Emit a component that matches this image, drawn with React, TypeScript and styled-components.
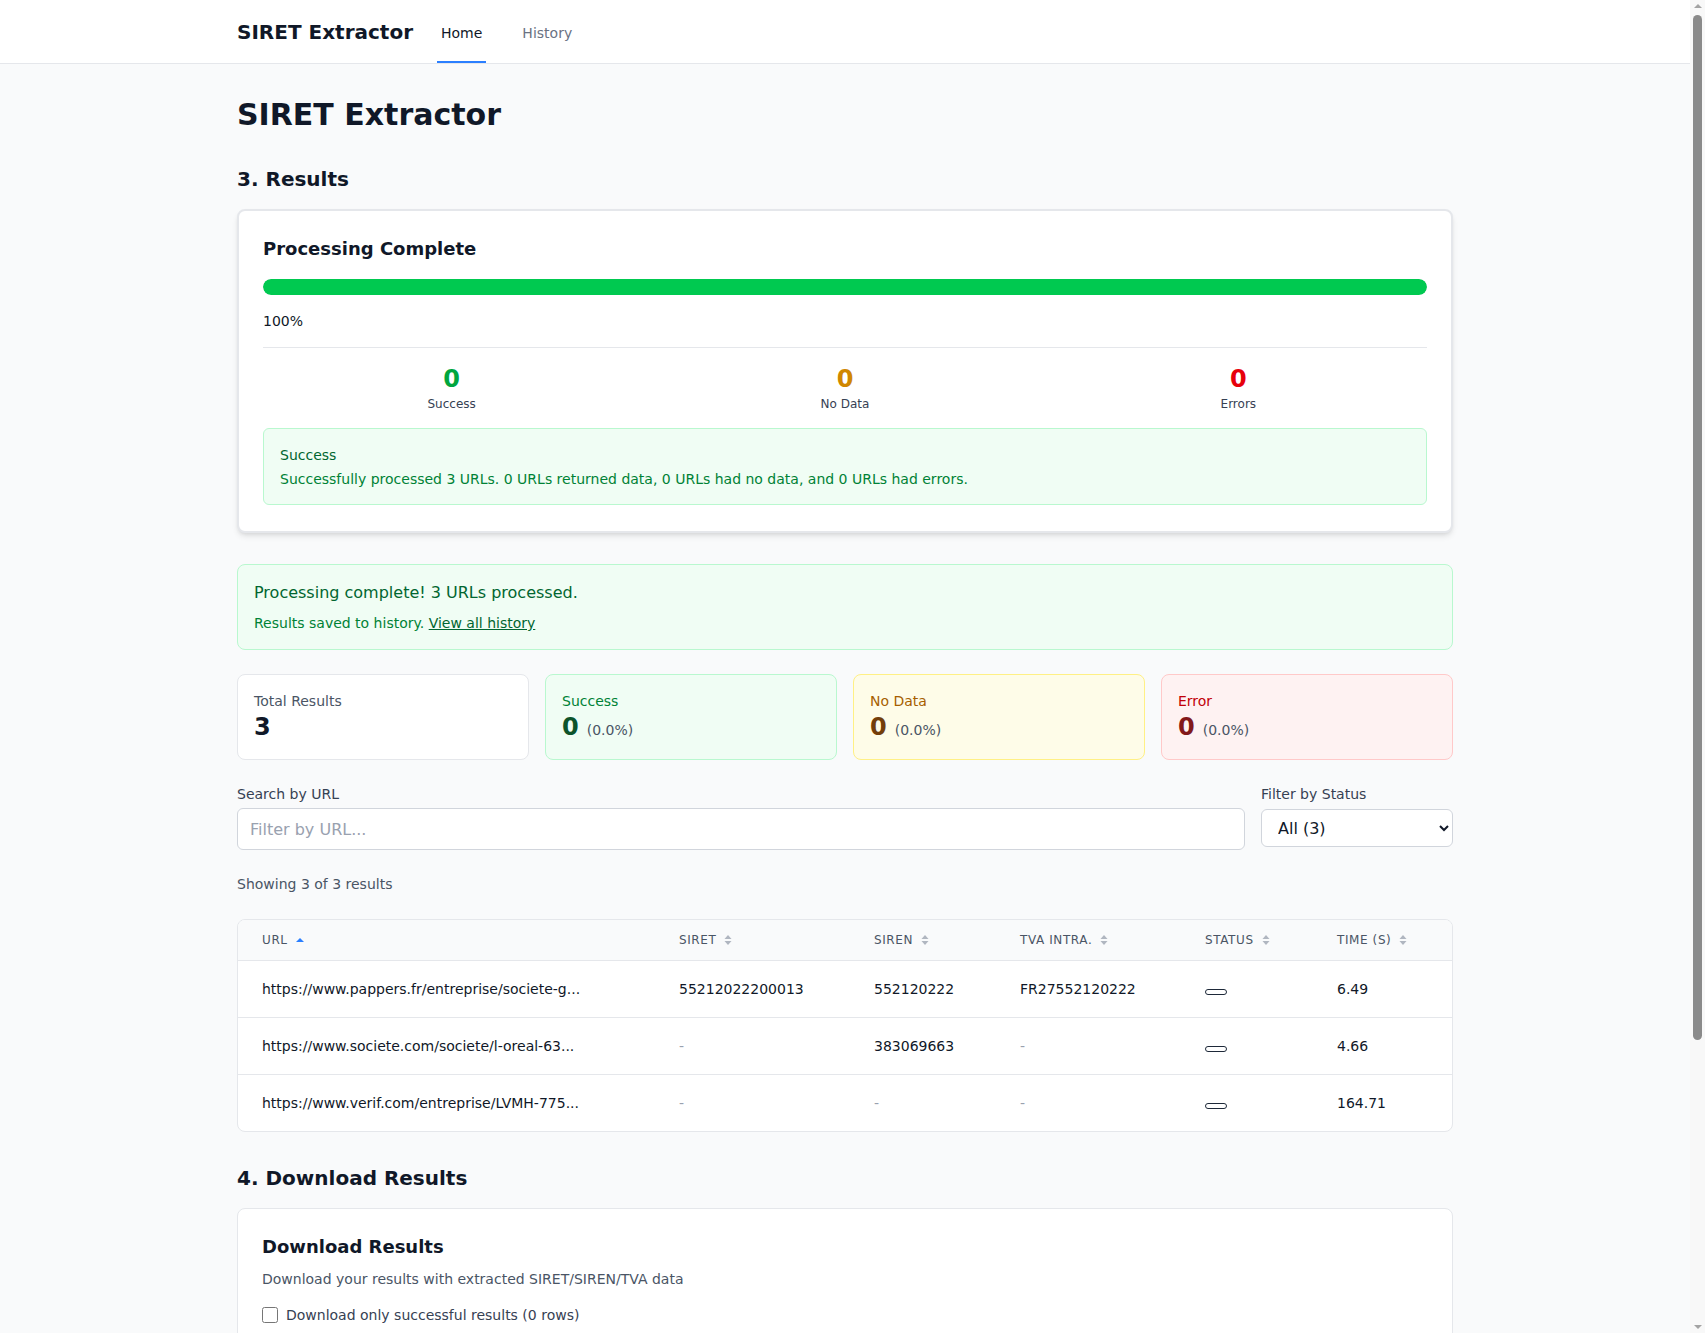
import React, { useState } from "react";
import styled, { createGlobalStyle, css } from "styled-components";

const GlobalStyle = createGlobalStyle`
  * {
    box-sizing: border-box;
  }
  body {
    margin: 0 15px 0 0;
    background: #f9fafb;
    font-family: "DejaVu Sans", "Noto Sans", sans-serif;
    color: #101828;
  }
`;

// the reference shows the browser's classic scrollbar, the page leaves 15px for it
const ScrollTrack = styled.div`
  position: fixed;
  top: 0;
  right: 0;
  width: 15px;
  height: 100vh;
  background: #f8f8f8;
  display: flex;
  flex-direction: column;
  align-items: center;
  justify-content: space-between;
  padding: 4px 0;
`;

const ScrollArrow = styled.div<{ $down?: boolean }>`
  width: 0;
  height: 0;
  border-left: 4px solid transparent;
  border-right: 4px solid transparent;
  ${(p) =>
    p.$down
      ? css`
          border-top: 4px solid #a3a3a3;
        `
      : css`
          border-bottom: 4px solid #a3a3a3;
        `}
`;

const ScrollThumb = styled.div`
  position: fixed;
  top: 15px;
  right: 3px;
  width: 9px;
  height: 1025px;
  border-radius: 5px;
  background: #8a8a8a;
`;

const Nav = styled.nav`
  height: 64px;
  background: #ffffff;
  border-bottom: 1px solid #e5e7eb;
`;

const NavInner = styled.div`
  max-width: 1280px;
  margin: 0 auto;
  padding: 0 32px;
  height: 100%;
  display: flex;
  align-items: stretch;
`;

const Brand = styled.div`
  display: flex;
  align-items: center;
  font-size: 20px;
  font-weight: 700;
  color: #101828;
  margin-right: 24px;
`;

const NavLinks = styled.div`
  display: flex;
  gap: 32px;
`;

const NavLink = styled.a<{ $active?: boolean }>`
  display: inline-flex;
  align-items: center;
  padding: 4px 4px 0;
  font-size: 14px;
  font-weight: 500;
  text-decoration: none;
  border-bottom: 2px solid ${(p) => (p.$active ? "#2b7fff" : "transparent")};
  color: ${(p) => (p.$active ? "#101828" : "#6a7282")};
  cursor: pointer;
`;

const Main = styled.main`
  max-width: 1280px;
  margin: 0 auto;
  padding: 33px 32px 48px;
`;

const PageTitle = styled.h1`
  margin: 0 0 32px;
  font-size: 30px;
  line-height: 36px;
  font-weight: 700;
  color: #101828;
`;

const SectionTitle = styled.h2<{ $top?: number }>`
  margin: ${(p) => p.$top ?? 0}px 0 16px;
  font-size: 20px;
  line-height: 28px;
  font-weight: 700;
  color: #101828;
`;

const Card = styled.div<{ $shadow?: boolean }>`
  background: #ffffff;
  border: 1px solid #e5e7eb;
  border-radius: 8px;
  padding: 24px;
  ${(p) =>
    p.$shadow &&
    css`
      border: 2px solid #e5e7eb;
      padding-bottom: 26px;
      box-shadow: 0 4px 6px -1px rgba(0, 0, 0, 0.1), 0 2px 4px -2px rgba(0, 0, 0, 0.1);
    `}
`;

const CardTitle = styled.h3<{ $mb?: number }>`
  margin: 0 0 ${(p) => p.$mb ?? 16}px;
  font-size: 18px;
  line-height: 28px;
  font-weight: 700;
  color: #101828;
`;

const ProgressTrack = styled.div`
  height: 16px;
  border-radius: 9999px;
  background: #e5e7eb;
  overflow: hidden;
`;

const ProgressFill = styled.div`
  height: 100%;
  background: #00c950;
  border-radius: 9999px;
`;

const Percent = styled.div`
  margin-top: 16px;
  font-size: 14px;
  line-height: 20px;
  color: #101828;
`;

const StatsRow = styled.div`
  margin-top: 16px;
  padding-top: 15px;
  border-top: 1px solid #e5e7eb;
  display: grid;
  grid-template-columns: repeat(3, 1fr);
  gap: 16px;
  text-align: center;
`;

const toneColor = {
  green: "#00a63e",
  yellow: "#d08700",
  red: "#e7000b",
};

const StatNumber = styled.div<{ $tone: keyof typeof toneColor }>`
  font-size: 24px;
  line-height: 32px;
  font-weight: 700;
  color: ${(p) => toneColor[p.$tone]};
`;

const StatLabel = styled.div`
  margin-top: 1px;
  font-size: 12px;
  line-height: 16px;
  color: #364153;
`;

const Alert = styled.div`
  margin-top: 16px;
  background: #f0fdf4;
  border: 1px solid #b9f8cf;
  border-radius: 6px;
  padding: 16px 16px 15px;
`;

const AlertTitle = styled.div`
  font-size: 14px;
  line-height: 20px;
  font-weight: 500;
  color: #016630;
`;

const AlertText = styled.div`
  margin-top: 4px;
  font-size: 14px;
  line-height: 20px;
  color: #008236;
`;

const Banner = styled.div`
  margin-top: 31px;
  background: #f0fdf4;
  border: 1px solid #b9f8cf;
  border-radius: 8px;
  padding: 16px;
`;

const BannerTitle = styled.p`
  margin: 0;
  font-size: 16px;
  line-height: 24px;
  color: #016630;
`;

const BannerText = styled.p`
  margin: 8px 0 0;
  font-size: 14px;
  line-height: 20px;
  color: #008236;

  a {
    color: #016630;
    text-decoration: underline;
  }
`;

const SummaryGrid = styled.div`
  margin-top: 24px;
  display: grid;
  grid-template-columns: repeat(4, 1fr);
  gap: 16px;
`;

const summaryTones = {
  neutral: { bg: "#ffffff", border: "#e5e7eb", label: "#4a5565", value: "#101828" },
  green: { bg: "#f0fdf4", border: "#b9f8cf", label: "#008236", value: "#0d542b" },
  yellow: { bg: "#fefce8", border: "#fff085", label: "#a65f00", value: "#733e0a" },
  red: { bg: "#fef2f2", border: "#ffc9c9", label: "#c10007", value: "#82181a" },
};

type SummaryTone = keyof typeof summaryTones;

const SummaryCard = styled.div<{ $tone: SummaryTone }>`
  background: ${(p) => summaryTones[p.$tone].bg};
  border: 1px solid ${(p) => summaryTones[p.$tone].border};
  border-radius: 8px;
  padding: 16px 16px 13px;
`;

const SummaryLabel = styled.div<{ $tone: SummaryTone }>`
  font-size: 14px;
  line-height: 20px;
  color: ${(p) => summaryTones[p.$tone].label};
`;

const SummaryValue = styled.div<{ $tone: SummaryTone }>`
  font-size: 24px;
  line-height: 32px;
  font-weight: 700;
  color: ${(p) => summaryTones[p.$tone].value};

  span {
    margin-left: 8px;
    font-size: 14px;
    font-weight: 400;
    color: #4a5565;
  }
`;

const FilterRow = styled.div`
  margin-top: 24px;
  display: flex;
  gap: 16px;
`;

const Field = styled.div<{ $grow?: boolean; $width?: number }>`
  display: flex;
  flex-direction: column;
  flex: ${(p) => (p.$grow ? "1" : "none")};
  width: ${(p) => (p.$width ? `${p.$width}px` : "auto")};
`;

const FieldLabel = styled.label`
  font-size: 14px;
  line-height: 20px;
  color: #364153;
  margin-bottom: 4px;
`;

const TextInput = styled.input`
  height: 42px;
  padding: 8px 12px;
  font-size: 16px;
  font-family: inherit;
  border: 1px solid #d1d5dc;
  border-radius: 6px;
  background: #ffffff;
  color: #101828;
  outline: none;

  &::placeholder {
    color: #99a1af;
  }
`;

const Select = styled.select`
  margin-top: 1px;
  height: 38px;
  padding: 0 8px 0 12px;
  font-size: 16px;
  font-family: inherit;
  border: 1px solid #d1d5dc;
  border-radius: 6px;
  background: #ffffff;
  color: #101828;
`;

const ShowingText = styled.div`
  margin-top: 24px;
  font-size: 14px;
  line-height: 20px;
  color: #4a5565;
`;

const TableWrap = styled.div`
  margin-top: 25px;
  background: #ffffff;
  border: 1px solid #e5e7eb;
  border-radius: 8px;
  overflow: hidden;
`;

const Table = styled.table`
  width: 100%;
  border-collapse: collapse;
  table-layout: fixed;
`;

const Th = styled.th<{ $width: number }>`
  width: ${(p) => p.$width}px;
  background: #f9fafb;
  padding: 12px 24px;
  text-align: left;
  font-size: 12px;
  line-height: 16px;
  font-weight: 500;
  letter-spacing: 0.05em;
  text-transform: uppercase;
  color: #4a5565;
  border-bottom: 1px solid #e5e7eb;
  white-space: nowrap;
`;

const HeadInner = styled.span`
  display: inline-flex;
  align-items: center;
  gap: 8px;
`;

const Td = styled.td<{ $muted?: boolean }>`
  padding: 18px 24px;
  font-size: 14px;
  line-height: 20px;
  color: ${(p) => (p.$muted ? "#99a1af" : "#101828")};
  white-space: nowrap;
  overflow: hidden;
`;

const Tr = styled.tr`
  & + & td {
    border-top: 1px solid #e5e7eb;
  }
`;

const StatusPill = styled.span`
  display: inline-block;
  width: 22px;
  height: 6px;
  border: 1.5px solid #1e2939;
  border-radius: 9999px;
  background: #ffffff;
  vertical-align: middle;
  margin-top: 4px;
`;

const CardText = styled.p`
  margin: 8px 0 0;
  font-size: 14px;
  line-height: 20px;
  color: #4a5565;
`;

const CheckRow = styled.label`
  margin-top: 16px;
  display: flex;
  align-items: center;
  gap: 8px;
  font-size: 14px;
  line-height: 20px;
  color: #364153;

  input {
    margin: 0;
    width: 16px;
    height: 16px;
  }
`;

const ButtonRow = styled.div`
  margin-top: 20px;
  display: flex;
  gap: 12px;
`;

const Button = styled.button<{ $primary?: boolean }>`
  padding: 10px 18px;
  font-size: 14px;
  font-family: inherit;
  font-weight: 500;
  border-radius: 6px;
  border: 1px solid ${(p) => (p.$primary ? "#155dfc" : "#d1d5dc")};
  background: ${(p) => (p.$primary ? "#155dfc" : "#ffffff")};
  color: ${(p) => (p.$primary ? "#ffffff" : "#364153")};
`;

const Footer = styled.div`
  margin-top: 32px;
  display: flex;
  justify-content: center;
  padding: 32px 0 80px;
`;

function SortIcon({ active }: { active?: boolean }) {
  if (active) {
    return (
      <svg width="8" height="6" viewBox="0 0 8 6">
        <path d="M0 5 L4 1 L8 5 Z" fill="#2b7fff" />
      </svg>
    );
  }
  return (
    <svg width="8" height="12" viewBox="0 0 8 12">
      <path d="M0.5 5 L4 1 L7.5 5 Z" fill="#b0b6c0" />
      <path d="M0.5 7 L4 11 L7.5 7 Z" fill="#b0b6c0" />
    </svg>
  );
}

const columns = [
  { key: "url", label: "URL", width: 417, active: true },
  { key: "siret", label: "SIRET", width: 195 },
  { key: "siren", label: "SIREN", width: 146 },
  { key: "tva", label: "TVA INTRA.", width: 185 },
  { key: "status", label: "STATUS", width: 132 },
  { key: "time", label: "TIME (S)", width: 139 },
];

const rows = [
  {
    url: "https://www.pappers.fr/entreprise/societe-g...",
    siret: "55212022200013",
    siren: "552120222",
    tva: "FR27552120222",
    time: "6.49",
  },
  {
    url: "https://www.societe.com/societe/l-oreal-63...",
    siret: "",
    siren: "383069663",
    tva: "",
    time: "4.66",
  },
  {
    url: "https://www.verif.com/entreprise/LVMH-775...",
    siret: "",
    siren: "",
    tva: "",
    time: "164.71",
  },
];

export default function App() {
  const [query, setQuery] = useState("");
  const [onlySuccess, setOnlySuccess] = useState(false);

  return (
    <>
      <GlobalStyle />
      <Nav>
        <NavInner>
          <Brand>SIRET Extractor</Brand>
          <NavLinks>
            <NavLink $active>Home</NavLink>
            <NavLink>History</NavLink>
          </NavLinks>
        </NavInner>
      </Nav>
      <Main>
        <PageTitle>SIRET Extractor</PageTitle>

        <SectionTitle>3. Results</SectionTitle>
        <Card $shadow>
          <CardTitle>Processing Complete</CardTitle>
          <ProgressTrack>
            <ProgressFill style={{ width: "100%" }} />
          </ProgressTrack>
          <Percent>100%</Percent>
          <StatsRow>
            <div>
              <StatNumber $tone="green">0</StatNumber>
              <StatLabel>Success</StatLabel>
            </div>
            <div>
              <StatNumber $tone="yellow">0</StatNumber>
              <StatLabel>No Data</StatLabel>
            </div>
            <div>
              <StatNumber $tone="red">0</StatNumber>
              <StatLabel>Errors</StatLabel>
            </div>
          </StatsRow>
          <Alert>
            <AlertTitle>Success</AlertTitle>
            <AlertText>
              Successfully processed 3 URLs. 0 URLs returned data, 0 URLs had no data, and 0 URLs had
              errors.
            </AlertText>
          </Alert>
        </Card>

        <Banner>
          <BannerTitle>Processing complete! 3 URLs processed.</BannerTitle>
          <BannerText>
            Results saved to history. <a>View all history</a>
          </BannerText>
        </Banner>

        <SummaryGrid>
          <SummaryCard $tone="neutral">
            <SummaryLabel $tone="neutral">Total Results</SummaryLabel>
            <SummaryValue $tone="neutral">3</SummaryValue>
          </SummaryCard>
          <SummaryCard $tone="green">
            <SummaryLabel $tone="green">Success</SummaryLabel>
            <SummaryValue $tone="green">
              0<span>(0.0%)</span>
            </SummaryValue>
          </SummaryCard>
          <SummaryCard $tone="yellow">
            <SummaryLabel $tone="yellow">No Data</SummaryLabel>
            <SummaryValue $tone="yellow">
              0<span>(0.0%)</span>
            </SummaryValue>
          </SummaryCard>
          <SummaryCard $tone="red">
            <SummaryLabel $tone="red">Error</SummaryLabel>
            <SummaryValue $tone="red">
              0<span>(0.0%)</span>
            </SummaryValue>
          </SummaryCard>
        </SummaryGrid>

        <FilterRow>
          <Field $grow>
            <FieldLabel>Search by URL</FieldLabel>
            <TextInput
              placeholder="Filter by URL..."
              value={query}
              onChange={(e) => setQuery(e.target.value)}
            />
          </Field>
          <Field $width={192}>
            <FieldLabel>Filter by Status</FieldLabel>
            <Select defaultValue="all">
              <option value="all">All (3)</option>
              <option value="success">Success (0)</option>
              <option value="no_data">No Data (0)</option>
              <option value="error">Error (0)</option>
            </Select>
          </Field>
        </FilterRow>

        <ShowingText>Showing 3 of 3 results</ShowingText>

        <TableWrap>
          <Table>
            <thead>
              <tr>
                {columns.map((c) => (
                  <Th key={c.key} $width={c.width}>
                    <HeadInner>
                      {c.label}
                      <SortIcon active={c.active} />
                    </HeadInner>
                  </Th>
                ))}
              </tr>
            </thead>
            <tbody>
              {rows.map((r) => (
                <Tr key={r.url}>
                  <Td>{r.url}</Td>
                  <Td $muted={!r.siret}>{r.siret || "-"}</Td>
                  <Td $muted={!r.siren}>{r.siren || "-"}</Td>
                  <Td $muted={!r.tva}>{r.tva || "-"}</Td>
                  <Td>
                    <StatusPill />
                  </Td>
                  <Td>{r.time}</Td>
                </Tr>
              ))}
            </tbody>
          </Table>
        </TableWrap>

        <SectionTitle $top={32}>4. Download Results</SectionTitle>
        <Card>
          <CardTitle $mb={0}>Download Results</CardTitle>
          <CardText>Download your results with extracted SIRET/SIREN/TVA data</CardText>
          <CheckRow>
            <input
              type="checkbox"
              checked={onlySuccess}
              onChange={(e) => setOnlySuccess(e.target.checked)}
            />
            Download only successful results (0 rows)
          </CheckRow>
          <ButtonRow>
            <Button $primary>Download CSV</Button>
            <Button>Download Excel</Button>
          </ButtonRow>
        </Card>

        <Footer>
          <Button>Start New Extraction</Button>
        </Footer>
      </Main>
      <ScrollTrack>
        <ScrollArrow />
        <ScrollArrow $down />
      </ScrollTrack>
      <ScrollThumb />
    </>
  );
}
